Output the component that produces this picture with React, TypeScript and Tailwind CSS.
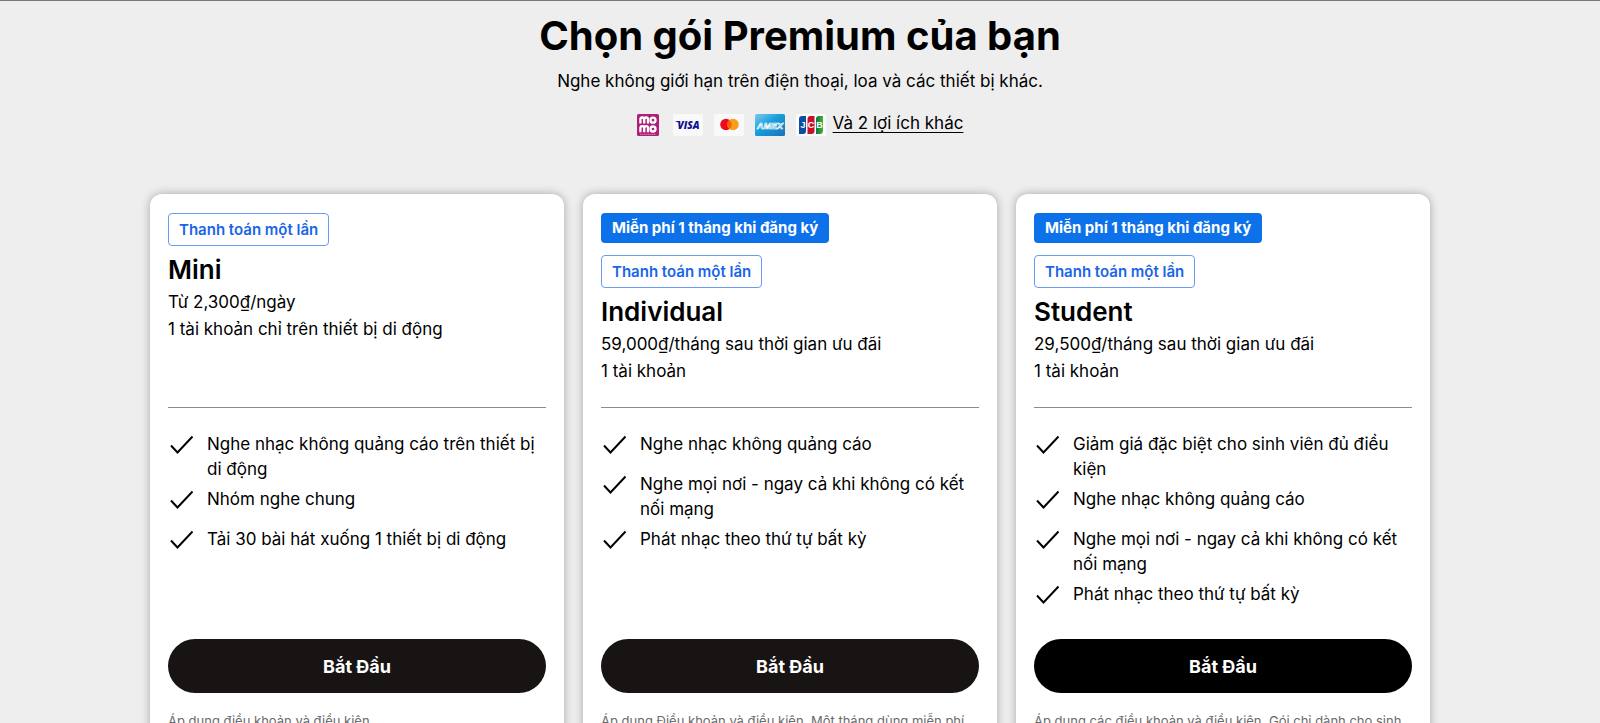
import React from "react";
import clsx from "clsx";

type Plan = {
  name: string;
  offer?: string;
  billing: string;
  price: string;
  accounts: string;
  features: string[];
  terms: string;
  active?: boolean;
};

const plans: Plan[] = [
  {
    name: "Mini",
    billing: "Thanh toán một lần",
    price: "Từ 2,300₫/ngày",
    accounts: "1 tài khoản chỉ trên thiết bị di động",
    features: [
      "Nghe nhạc không quảng cáo trên thiết bị di động",
      "Nhóm nghe chung",
      "Tải 30 bài hát xuống 1 thiết bị di động",
    ],
    terms: "Áp dụng điều khoản và điều kiện.",
  },
  {
    name: "Individual",
    offer: "Miễn phí 1 tháng khi đăng ký",
    billing: "Thanh toán một lần",
    price: "59,000₫/tháng sau thời gian ưu đãi",
    accounts: "1 tài khoản",
    features: [
      "Nghe nhạc không quảng cáo",
      "Nghe mọi nơi - ngay cả khi không có kết nối mạng",
      "Phát nhạc theo thứ tự bất kỳ",
    ],
    terms: "Áp dụng Điều khoản và điều kiện. Một tháng dùng miễn phí",
  },
  {
    name: "Student",
    offer: "Miễn phí 1 tháng khi đăng ký",
    billing: "Thanh toán một lần",
    price: "29,500₫/tháng sau thời gian ưu đãi",
    accounts: "1 tài khoản",
    features: [
      "Giảm giá đặc biệt cho sinh viên đủ điều kiện",
      "Nghe nhạc không quảng cáo",
      "Nghe mọi nơi - ngay cả khi không có kết nối mạng",
      "Phát nhạc theo thứ tự bất kỳ",
    ],
    terms: "Áp dụng các điều khoản và điều kiện. Gói chỉ dành cho sinh",
    active: true,
  },
];

function MomoLogo() {
  return (
    <svg className="mr-[3px]" width="22" height="22" viewBox="0 0 22 22" role="img" aria-label="MoMo">
      <rect width="22" height="22" rx="1.5" fill="#ae1f77" />
      <g fill="none" stroke="#fff" strokeWidth="2.3">
        <path d="M3.4 9.5V5.4a1.9 1.9 0 0 1 3.8 0v4.1V5.4a1.9 1.9 0 0 1 3.8 0v4.1" />
        <circle cx="16" cy="6.2" r="2.5" />
        <path d="M3.4 18.2V14a1.9 1.9 0 0 1 3.8 0v4.2V14a1.9 1.9 0 0 1 3.8 0v4.2" />
        <circle cx="16" cy="15" r="2.5" />
      </g>
      <path d="M3 20.3h16" stroke="#e0a5c8" strokeWidth="0.8" strokeDasharray="1.5 0.5" />
    </svg>
  );
}

function VisaLogo() {
  return (
    <svg width="30" height="22" viewBox="0 0 30 22" role="img" aria-label="Visa">
      <rect width="30" height="22" rx="2" fill="#f9f9f9" />
      <text
        x="15.5"
        y="14.5"
        textAnchor="middle"
        fontFamily="Open Sans, sans-serif"
        fontSize="10"
        fontStyle="italic"
        fontWeight="800"
        fill="#10118f"
      >
        VISA
      </text>
      <path d="M2.5 7h3.3l1 2.5C5.5 8.2 4.2 7.6 2.5 7.4z" fill="#10118f" />
    </svg>
  );
}

function MastercardLogo() {
  return (
    <svg width="30" height="22" viewBox="0 0 30 22" role="img" aria-label="Mastercard">
      <rect width="30" height="22" rx="2" fill="#f9f9f9" />
      <circle cx="12" cy="10.5" r="5.8" fill="#eb0a20" />
      <circle cx="19" cy="10.5" r="5.8" fill="#f79e1b" />
      <path d="M15.5 5.9a5.8 5.8 0 0 1 0 9.2 5.8 5.8 0 0 1 0-9.2z" fill="#ff5f00" />
    </svg>
  );
}

function AmexLogo() {
  return (
    <svg width="30" height="22" viewBox="0 0 30 22" role="img" aria-label="American Express">
      <defs>
        <linearGradient id="amex" x1="0" y1="0" x2="1" y2="1">
          <stop offset="0" stopColor="#7cc9f0" />
          <stop offset="0.45" stopColor="#159edb" />
          <stop offset="1" stopColor="#1f70b8" />
        </linearGradient>
      </defs>
      <rect width="30" height="22" rx="1.5" fill="url(#amex)" />
      <text
        x="15"
        y="14.5"
        textAnchor="middle"
        fontFamily="Liberation Sans, sans-serif"
        fontSize="9"
        fontStyle="italic"
        fontWeight="700"
        fill="none"
        stroke="#fff"
        strokeWidth="0.7"
      >
        AMEX
      </text>
    </svg>
  );
}

function JcbLogo() {
  return (
    <svg width="30" height="22" viewBox="0 0 30 22" role="img" aria-label="JCB">
      <defs>
        <linearGradient id="jcb-green" x1="0" y1="0" x2="1" y2="0">
          <stop offset="0" stopColor="#007b3a" />
          <stop offset="1" stopColor="#4fae3a" />
        </linearGradient>
      </defs>
      <rect width="30" height="22" rx="2" fill="#fcfcfc" />
      <path d="M6 2h4v15a3 3 0 0 1-3 3H3V5a3 3 0 0 1 3-3z" fill="#0b4ea2" />
      <path d="M14.500 2h4v15a3 3 0 0 1-3 3h-4V5a3 3 0 0 1 3-3z" fill="#c8102e" />
      <path d="M23 2h4v15a3 3 0 0 1-3 3h-4V5a3 3 0 0 1 3-3z" fill="url(#jcb-green)" />
      <g fontFamily="Liberation Sans, sans-serif" fontSize="9" fontWeight="700" fill="#fff" textAnchor="middle">
        <text x="7" y="14">J</text>
        <text x="15" y="14">C</text>
        <text x="23.5" y="14">B</text>
      </g>
    </svg>
  );
}

function CheckIcon() {
  return (
    <svg className="mt-px size-6 shrink-0" viewBox="0 0 24 24" fill="none" aria-hidden="true">
      <path d="M2 12.5 8.5 19.5 23.5 3.5" stroke="#000" strokeWidth="2" />
    </svg>
  );
}

function PlanCard({ plan }: { plan: Plan }) {
  return (
    <article className="flex flex-col rounded-xl bg-white px-[18px] pt-[19px] pb-8 shadow-[0_0_10px_rgba(0,0,0,0.3)]">
      <div className="flex h-[195px] flex-col items-start border-b border-[#8c8c8c]">
        {plan.offer && (
          <span className="mb-3 rounded bg-[#0d72ea] px-[11px] text-[15px] leading-[30px] font-bold text-white">
            {plan.offer}
          </span>
        )}
        <span className="rounded border border-[#6d9bf0] px-[10px] text-[15px] leading-[31px] font-semibold text-[#1a66e8]">
          {plan.billing}
        </span>
        <h2 className="mt-[7px] text-[26px] leading-[34px] font-semibold">{plan.name}</h2>
        <div className="mt-[2px] leading-[27px]">
          <p>{plan.price}</p>
          <p>{plan.accounts}</p>
        </div>
      </div>

      <ul className="mt-6 flex h-[207px] flex-col gap-[5px]">
        {plan.features.map((feature) => (
          <li key={feature} className="flex min-h-[35px] items-start gap-[14px] pl-px leading-[25px]">
            <CheckIcon />
            <span>{feature}</span>
          </li>
        ))}
      </ul>

      <button
        type="button"
        className={clsx(
          "h-[54px] w-full rounded-full text-[18px] font-bold text-white",
          plan.active ? "bg-black" : "bg-[#191414]"
        )}
      >
        Bắt Đầu
      </button>
      <p className="mt-[18px] text-[13px] leading-5 text-[#6a6a6a]">{plan.terms}</p>
    </article>
  );
}

export default function App(): React.JSX.Element {
  return (
    <main className="h-screen overflow-hidden border-t border-[#777777] bg-[#eeeeee] font-['Inter','Noto_Sans',sans-serif] text-[17px] text-black">
      <header className="flex flex-col items-center pt-[9px] text-center">
        <h1 className="text-[40px] leading-[52px] font-bold">Chọn gói Premium của bạn</h1>
        <p className="mt-[6px] leading-[26px]">
          Nghe không giới hạn trên điện thoại, loa và các thiết bị khác.
        </p>
        <div className="mt-4 flex items-center">
          <div className="flex items-center gap-[11px] pt-1">
            <MomoLogo />
            <VisaLogo />
            <MastercardLogo />
            <AmexLogo />
            <JcbLogo />
          </div>
          <a href="#payment" className="ml-[7px] leading-[26px] underline underline-offset-3">
            Và 2 lợi ích khác
          </a>
        </div>
      </header>

      <section className="mx-auto mt-[58px] grid max-w-[1300px] grid-cols-3 gap-[19px] pr-5">
        {plans.map((plan) => (
          <PlanCard key={plan.name} plan={plan} />
        ))}
      </section>
    </main>
  );
}
